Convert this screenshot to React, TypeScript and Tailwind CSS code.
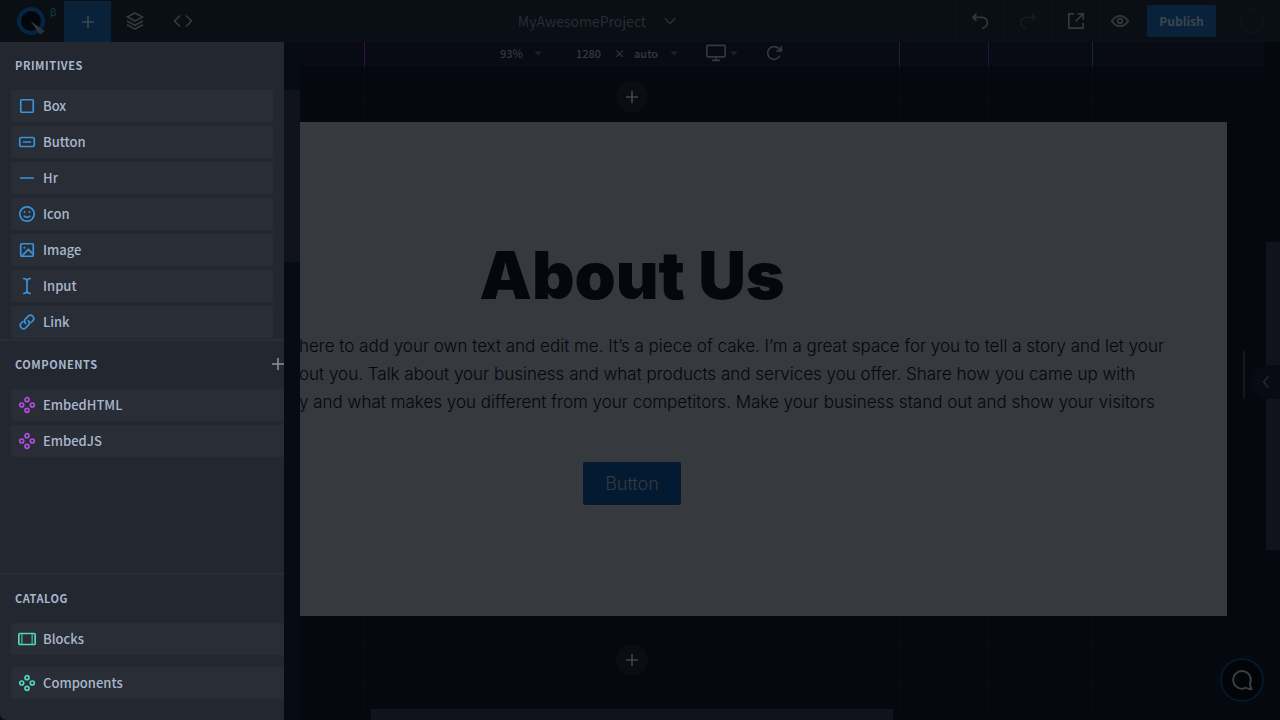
import type { ReactNode } from "react";

const PrimitiveIcon = ({ children, className }: { children: ReactNode; className: string }) => (
  <svg
    viewBox="0 0 18 18"
    fill="none"
    stroke="currentColor"
    strokeWidth="1.7"
    strokeLinecap="round"
    strokeLinejoin="round"
    aria-hidden="true"
    className={`w-[18px] h-[18px] shrink-0 ${className}`}
  >
    {children}
  </svg>
);

const ToolIcon = ({ children, className = "" }: { children: ReactNode; className?: string }) => (
  <svg
    viewBox="0 0 20 20"
    fill="none"
    stroke="currentColor"
    strokeWidth="1.7"
    aria-hidden="true"
    className={`w-5 h-5 shrink-0 ${className}`}
  >
    {children}
  </svg>
);

const Caret = ({ className = "" }: { className?: string }) => (
  <svg viewBox="0 0 8 5" aria-hidden="true" className={`w-2 h-[5px] fill-[#1e2229] ${className}`}>
    <path d="M0.5 0.5h7L4 4.5z" />
  </svg>
);

const clover = (
  <>
    <circle cx="9" cy="3.7" r="2" />
    <circle cx="3.7" cy="9" r="2" />
    <circle cx="14.3" cy="9" r="2" />
    <circle cx="9" cy="14.3" r="2" />
  </>
);

const primitives = [
  { name: "Box", icon: <rect x="2.75" y="2.75" width="12.5" height="12.5" rx="1" /> },
  {
    name: "Button",
    icon: (
      <>
        <rect x="1.75" y="4.5" width="14.5" height="9" rx="1.5" />
        <path d="M5.5 9h7" />
      </>
    ),
  },
  { name: "Hr", icon: <path d="M2 9h14" strokeLinecap="butt" /> },
  {
    name: "Icon",
    icon: (
      <>
        <circle cx="9" cy="9" r="7.2" />
        <path d="M6.2 11.2q2.8 2.2 5.6 0" />
        <path d="M6.5 7v.1M11.5 7v.1" strokeWidth="1.9" />
      </>
    ),
  },
  {
    name: "Image",
    icon: (
      <>
        <rect x="2.75" y="2.75" width="12.5" height="12.5" rx="1" />
        <path d="M4.8 14.2L10.4 8.4L14.8 12.8" />
        <path d="M6.4 6.6v.1" strokeWidth="1.9" />
      </>
    ),
  },
  {
    name: "Input",
    icon: <path d="M5.7 1.5Q9 1.8 9 4.2Q9 1.8 12.3 1.5M9 4v10M5.7 16.5Q9 16.2 9 13.8Q9 16.2 12.3 16.5" />,
  },
  {
    name: "Link",
    icon: (
      <>
        <path d="M7.6 10.4a3.3 3.3 0 0 1 0-4.6l2.9-2.9a3.3 3.3 0 0 1 4.6 4.6l-2 2" />
        <path d="M10.4 7.6a3.3 3.3 0 0 1 0 4.6l-2.9 2.9a3.3 3.3 0 0 1-4.6-4.6l2-2" />
      </>
    ),
  },
];

const components = ["EmbedHTML", "EmbedJS"];

const catalog = [
  {
    name: "Blocks",
    icon: (
      <>
        <rect x="0.85" y="3.5" width="16.3" height="11" rx="1" />
        <path d="M3.9 4v10M14.1 4v10" strokeWidth="1" />
      </>
    ),
  },
  { name: "Components", icon: clover },
];

const SectionTitle = ({ children }: { children: ReactNode }) => (
  <h2 className="text-[11px] leading-4 font-bold tracking-wider uppercase text-[#a9b7cd]">{children}</h2>
);

const Item = ({ name, icon, color, className }: { name: string; icon: ReactNode; color: string; className: string }) => (
  <button
    type="button"
    className={`flex items-center gap-[7px] h-8 pl-[7px] bg-[#292d35] text-[13px] leading-4 font-medium text-[#a9b7cd] text-left ${className}`}
  >
    <PrimitiveIcon className={color}>{icon}</PrimitiveIcon>
    {name}
  </button>
);

const AddSection = () => (
  <button
    type="button"
    aria-label="Add section"
    className="w-8 h-8 rounded-full bg-[#0a0d14] text-[#42454a] flex items-center justify-center"
  >
    <svg viewBox="0 0 12 12" stroke="currentColor" strokeWidth="1.6" aria-hidden="true" className="w-3 h-3">
      <path d="M6 0v12M0 6h12" />
    </svg>
  </button>
);

const Header = () => (
  <header className="h-[42px] shrink-0 flex items-stretch bg-[#0a0e15] text-[#35393f]">
    <a href="#home" aria-label="Home" className="w-16 flex items-center pl-4">
      <svg viewBox="0 0 44 32" aria-hidden="true" className="w-11 h-8">
        <circle cx="15" cy="16" r="12" fill="#02060d" stroke="#072440" strokeWidth="4" />
        <path d="M14.5 16L28.5 26L24 29.5z" fill="#35393f" />
        <path d="M22 21.5L28.5 26L24 29.5z" fill="#183a3c" />
        <text x="34" y="11" fontSize="10" fontWeight="500" fill="#123a35" fontFamily="Noto Sans CJK SC, sans-serif">
          β
        </text>
      </svg>
    </a>
    <button type="button" aria-label="Add" className="w-[47px] mt-px flex items-center justify-center bg-[#09223a]">
      <ToolIcon className="text-[#3b4550]">
        <path d="M10 4v12M4 10h12" />
      </ToolIcon>
    </button>
    <button type="button" aria-label="Layers" className="w-12 flex items-center justify-center border-r border-[#0d1118]">
      <ToolIcon>
        <path d="M10 2L17.5 6L10 10L2.5 6z" />
        <path d="M2 10l8 4.2L18 10M2 13.8l8 4.2l8-4.2" />
      </ToolIcon>
    </button>
    <button type="button" aria-label="Code" className="w-12 flex items-center justify-center border-r border-[#0d1118]">
      <ToolIcon>
        <path d="M7 4.5L1.5 10L7 15.5M13 4.5L18.5 10L13 15.5" />
      </ToolIcon>
    </button>
    <div className="flex-1 flex items-center justify-center pl-9">
      <button type="button" className="flex items-center gap-3.5 text-sm text-[#282c33]">
        MyAwesomeProject
        <ToolIcon className="text-[#292d33]">
          <path d="M4.5 7L10 12.5L15.5 7" />
        </ToolIcon>
      </button>
    </div>
    <button type="button" aria-label="Undo" className="w-12 flex items-center justify-center border-l border-[#0d1118]">
      <ToolIcon>
        <path d="M6.5 1.8L3 5.3L6.5 8.8M3 5.3h9a5.2 5.2 0 0 1 0 10.8" transform="translate(0 1)" />
      </ToolIcon>
    </button>
    <button type="button" aria-label="Redo" className="w-12 flex items-center justify-center border-l border-[#0d1118] text-[#171b21]">
      <ToolIcon>
        <path d="M13.5 1.8L17 5.3L13.5 8.8M17 5.3H8a5.2 5.2 0 0 0 0 10.8" transform="translate(0 1)" />
      </ToolIcon>
    </button>
    <button type="button" aria-label="Open in new tab" className="w-12 flex items-center justify-center border-l border-[#0d1118]">
      <ToolIcon>
        <path d="M8 2.8H2.8v14.4h14.4V12M9.5 10.5L17 3M11.5 2.8h5.7v5.7" />
      </ToolIcon>
    </button>
    <button type="button" aria-label="Preview" className="w-10 flex items-center justify-center border-l border-[#0d1118]">
      <ToolIcon>
        <path d="M1.8 10Q5.5 4.8 10 4.8T18.2 10Q14.5 15.2 10 15.2T1.8 10z" />
        <circle cx="10" cy="10" r="2.3" />
      </ToolIcon>
    </button>
    <div className="flex items-center gap-6 pl-2 pr-4">
      <button type="button" className="h-8 w-[69px] rounded-xs bg-[#09223a] text-xs font-bold text-[#3b4550]">
        Publish
      </button>
      <button type="button" aria-label="Account" className="w-6 h-6 rounded-full border border-[#12161c]" />
    </div>
  </header>
);

const Toolbar = () => (
  <div className="h-6 flex items-center justify-center bg-[#080b13] pl-5 pb-0.5 text-[11px] leading-4 font-medium text-[#35383d]">
    <label className="flex items-center">
      <select aria-label="Zoom" className="appearance-none w-[34px]">
        <option>93%</option>
      </select>
      <Caret />
    </label>
    <input aria-label="Width" defaultValue="1280" className="w-[38px] ml-[34px]" />
    <span className="w-5">×</span>
    <label className="flex items-center">
      <select aria-label="Height" className="appearance-none w-9">
        <option>auto</option>
      </select>
      <Caret />
    </label>
    <button type="button" aria-label="Device" className="flex items-center gap-1 ml-7">
      <ToolIcon>
        <rect x="0.8" y="2.3" width="18.4" height="11.6" rx="1.2" />
        <path d="M10 14v3M6 17.3h8" />
      </ToolIcon>
      <Caret />
    </button>
    <button type="button" aria-label="Reload" className="ml-[26px]">
      <ToolIcon>
        <path d="M15.9 12.6A6.4 6.4 0 1 1 14.6 5.4L17 7.8M17.3 3v5h-5" />
      </ToolIcon>
    </button>
  </div>
);

// responsive breakpoints, drawn as centered frames so both edges stay in place
const guides = [
  { size: 576, frame: "w-[536px]", left: "border-l-[#3a1242]", right: "border-r-[#2b1a30]" },
  { size: 768, frame: "w-[714px]", left: "border-l-[#1c1640]", right: "border-r-[#1c1640]" },
  { size: 992, frame: "w-[922px]", left: "border-l-[#12283c]", right: "border-r-[#12283c]" },
];

const Canvas = () => (
  <main className="relative flex-1 min-w-0 flex flex-col overflow-hidden">
    <Toolbar />
    {guides.map((guide) => (
      <div key={guide.size} className="absolute inset-0 flex justify-center pointer-events-none">
        <div className={`shrink-0 flex flex-col ${guide.frame}`}>
          <div className={`h-6 border-x ${guide.left} ${guide.right}`} />
          <div className="flex-1 border-x border-dashed border-[#0d1017] mb-3" />
        </div>
      </div>
    ))}
    <div className="relative flex-1 flex flex-col px-[37px]">
      <div className="h-14 pt-[15px] flex justify-center">
        <AddSection />
      </div>
      <section className="flex flex-col items-center bg-[#36393d] pt-[113px] pb-[111px] text-[#04070d] font-['Inter',sans-serif]">
        <h1 className="text-[66px] leading-[80px] font-black">About Us</h1>
        <p className="self-stretch mt-[17px] pl-[262px] text-[17px] leading-7 font-[350] whitespace-nowrap">
          here to add your own text and edit me. It’s a piece of cake. I’m a great space for you to tell a story and let your
          <br />
          out you. Talk about your business and what products and services you offer. Share how you came up with
          <br />
          y and what makes you different from your competitors. Make your business stand out and show your visitors
        </p>
        <button type="button" className="mt-[46px] w-[98px] h-[43px] rounded-xs bg-[#041a33] text-lg font-light text-[#36393d]">
          Button
        </button>
      </section>
      <div className="pt-7 flex justify-center">
        <AddSection />
      </div>
      <div className="mt-[33px] flex-1 w-[522px] self-center bg-[#10131b]" />
    </div>
    <div className="absolute right-[19px] top-[309px] w-0.5 h-12 bg-[#14171e]" />
  </main>
);

const Sidebar = () => (
  <aside className="z-10 flex w-[300px] bg-[#070b13]">
    <div className="w-[284px] flex flex-col bg-[#222730] rounded-bl-md overflow-hidden">
      <section>
        <div className="h-12 flex items-center pl-[15px] pb-0.5">
          <SectionTitle>Primitives</SectionTitle>
        </div>
        <div className="flex flex-col gap-1 pl-[11px] pr-[11px] pb-px">
          {primitives.map((item) => (
            <Item key={item.name} name={item.name} icon={item.icon} color="text-[#3893db]" className="rounded-xs" />
          ))}
        </div>
      </section>
      <section className="flex-1 border-t-2 border-[#292d36]">
        <div className="h-12 flex items-center justify-between pl-[15px] pb-0.5">
          <SectionTitle>Components</SectionTitle>
          <button type="button" aria-label="New component" className="text-[#8a94a4]">
            <svg viewBox="0 0 12 12" stroke="currentColor" strokeWidth="1.5" aria-hidden="true" className="w-3 h-3">
              <path d="M6 0v12M0 6h12" />
            </svg>
          </button>
        </div>
        <div className="flex flex-col gap-1 pl-[11px]">
          {components.map((name) => (
            <Item key={name} name={name} icon={clover} color="text-[#b14be4]" className="rounded-l-xs" />
          ))}
        </div>
      </section>
      <section className="border-t-2 border-[#292d36] pb-[21px]">
        <div className="h-12 flex items-center pl-[15px] pb-0.5">
          <SectionTitle>Catalog</SectionTitle>
        </div>
        <div className="flex flex-col gap-3 pl-[11px]">
          {catalog.map((item) => (
            <Item key={item.name} name={item.name} icon={item.icon} color="text-[#52d6ba]" className="rounded-l-xs" />
          ))}
        </div>
      </section>
    </div>
    {/* Scrollbar */}
    <div className="flex-1 pt-12">
      <div className="h-[172px] bg-[#10131b]" />
    </div>
  </aside>
);

const App = () => {
  return (
    <div className="relative h-screen flex flex-col overflow-hidden bg-[#05080f] font-['Noto_Sans_CJK_SC',sans-serif]">
      <Header />
      <div className="flex-1 min-h-0 grid grid-cols-1 grid-rows-1">
        <div className="col-start-1 row-start-1 min-w-0 flex">
          <Canvas />
          <div className="relative w-4 pl-0.5 pt-[200px]">
            <div className="h-[308px] bg-[#10131b]" />
            <button
              type="button"
              aria-label="Open panel"
              className="absolute right-0 top-[323px] w-[29px] h-[34px] pl-2.5 rounded-l-full bg-[#080b13] text-[#24272e]"
            >
              <svg viewBox="0 0 10 14" fill="none" stroke="currentColor" strokeWidth="1.5" aria-hidden="true" className="w-2.5 h-3.5">
                <path d="M7.5 1.5L2.5 7L7.5 12.5" />
              </svg>
            </button>
          </div>
        </div>
        <div className="col-start-1 row-start-1 flex w-[300px]">
          <Sidebar />
        </div>
      </div>
      <button
        type="button"
        aria-label="Help"
        className="absolute z-20 right-4 bottom-[18px] w-11 h-11 rounded-full border-2 border-[#04192e] bg-[#020408] text-[#3c3f44] flex items-center justify-center"
      >
        <svg viewBox="0 0 22 22" fill="none" stroke="currentColor" strokeWidth="1.9" strokeLinejoin="round" aria-hidden="true" className="w-[22px] h-[22px]">
          <path d="M19 14.5A8.8 8.8 0 1 0 15 18.7Q17.5 20.2 20.5 20.3Q19 17.5 19 14.5z" />
        </svg>
      </button>
    </div>
  );
};

export default App;
